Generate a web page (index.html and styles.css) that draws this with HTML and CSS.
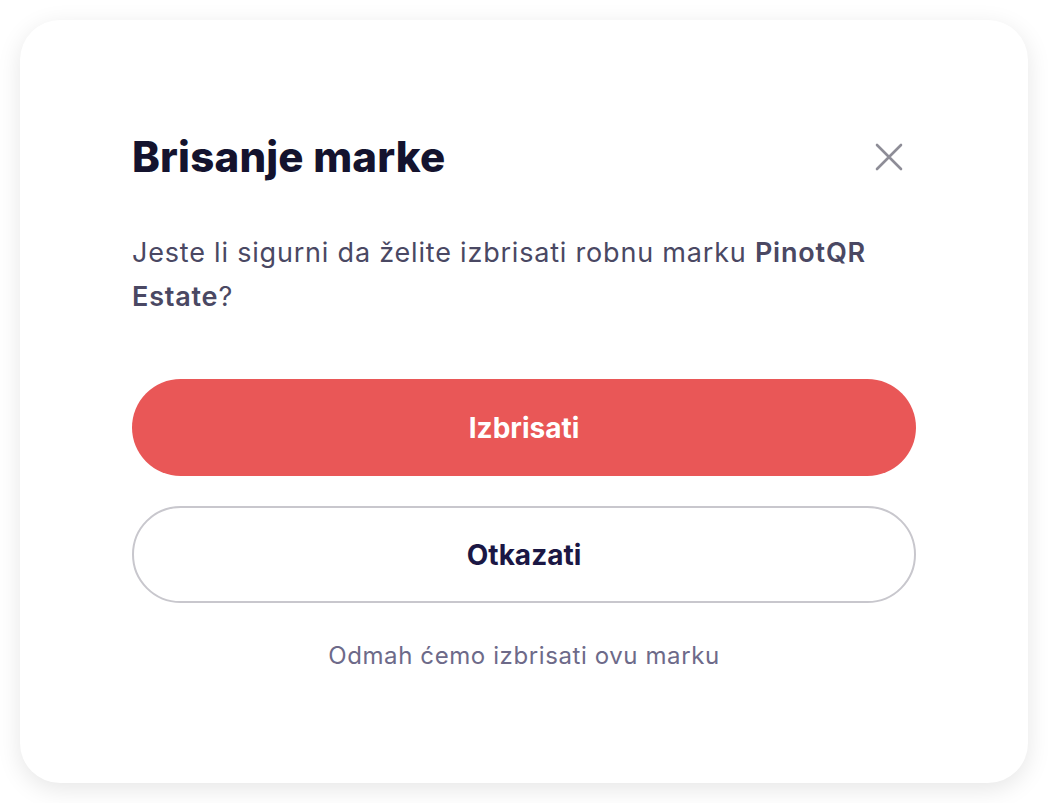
FILE: index.html
```html
<!doctype html>
<html lang="hr">
    <head>
        <meta charset="UTF-8" />
        <meta name="viewport" content="width=device-width, initial-scale=1.0" />
        <title>Brisanje marke</title>
        <link rel="stylesheet" href="styles.css">
    </head>
    <body>
        <div class="modal">
            <div class="modal-header">
                <h1>Brisanje marke</h1>
                <button class="close-btn" aria-label="Zatvori">
                    <svg width="28" height="28" viewBox="0 0 28 28">
                        <path d="M2 2 L26 26 M26 2 L2 26" stroke="#8e8d97" stroke-width="2.6" stroke-linecap="round" fill="none" />
                    </svg>
                </button>
            </div>
            <p class="modal-text">
                Jeste li sigurni da želite izbrisati robnu marku <strong>PinotQR Estate</strong>?
            </p>
            <div class="modal-actions">
                <button class="btn btn-danger">Izbrisati</button>
                <button class="btn btn-outline">Otkazati</button>
            </div>
            <p class="modal-note">Odmah ćemo izbrisati ovu marku</p>
        </div>
    </body>
</html>
```

FILE: styles.css
```css
* {
    margin: 0;
    padding: 0;
    box-sizing: border-box;
}

body {
    font-family: "Inter", "Noto Sans", sans-serif;
    background: #ffffff;
    padding: 20px;
    color: #14132e;
}

.modal {
    background: #ffffff;
    border-radius: 40px;
    box-shadow: 0 6px 24px rgba(0, 0, 0, 0.1);
    padding: 114px 112px 0;
    height: 763px;
}

.modal-header {
    display: flex;
    justify-content: space-between;
    align-items: center;
}

.modal-header h1 {
    font-size: 42px;
    font-weight: 800;
    letter-spacing: 0.2px;
    color: #14132e;
    line-height: 46px;
}

.close-btn {
    background: none;
    border: none;
    cursor: pointer;
    width: 28px;
    height: 28px;
    margin-right: 13px;
}

.modal-text {
    margin-top: 51px;
    font-size: 27px;
    letter-spacing: 0.8px;
    line-height: 44px;
    color: #4a4863;
}

.modal-text strong {
    font-weight: 600;
}

.modal-actions {
    display: flex;
    flex-direction: column;
    gap: 30px;
    margin-top: 60px;
}

.btn {
    height: 97px;
    border-radius: 49px;
    font-family: inherit;
    font-size: 28px;
    font-weight: 700;
    cursor: pointer;
}

.btn-danger {
    background: #e95757;
    color: #ffffff;
    border: none;
}

.btn-outline {
    background: #ffffff;
    color: #1b1744;
    border: 2px solid #c8c7cd;
}

.modal-note {
    margin-top: 38px;
    text-align: center;
    font-size: 24px;
    letter-spacing: 0.6px;
    color: #6d6a89;
}
```
